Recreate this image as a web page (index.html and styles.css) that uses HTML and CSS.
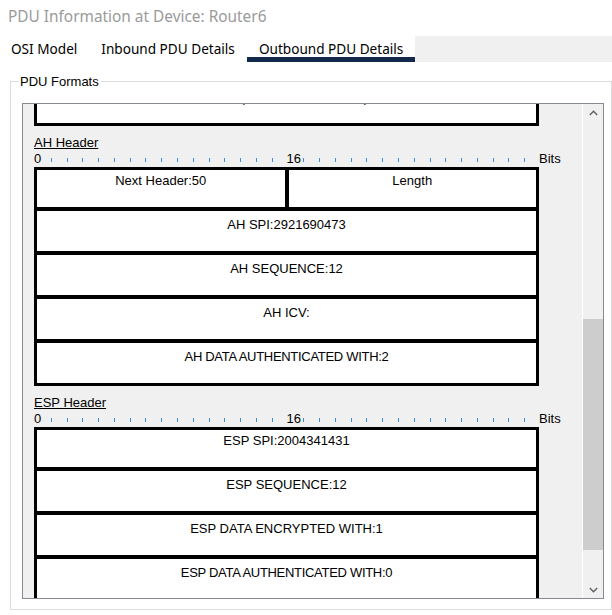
FILE: index.html
```html
<!DOCTYPE html>
<html>
<head>
<meta charset="utf-8">
<link rel="stylesheet" href="styles.css">
</head>
<body>
<div class="title">PDU Information at Device: Router6</div>
<div class="tabs">
  <div class="tab first">OSI Model</div>
  <div class="tab">Inbound PDU Details</div>
  <div class="tab active">Outbound PDU Details</div>
  <div class="tab-fill"></div>
</div>
<fieldset class="group">
  <legend class="group-title">PDU Formats</legend>
  <div class="panel">
    <div class="viewport">
      <div class="content">
        <div class="fields partial">
          <div class="row"><div class="cell">DATA (VARIABLE LENGTH)</div></div>
        </div>

        <div class="section">
          <div class="sec-title">AH Header</div>
          <div class="ruler">
            <div class="scale">
              <span class="num">0</span>
              <span class="tick"></span><span class="tick"></span><span class="tick"></span><span class="tick"></span><span class="tick"></span>
              <span class="tick"></span><span class="tick"></span><span class="tick"></span><span class="tick"></span><span class="tick"></span>
              <span class="tick"></span><span class="tick"></span><span class="tick"></span><span class="tick"></span><span class="tick"></span>
              <span class="num">16</span>
              <span class="tick"></span><span class="tick"></span><span class="tick"></span><span class="tick"></span><span class="tick"></span>
              <span class="tick"></span><span class="tick"></span><span class="tick"></span><span class="tick"></span><span class="tick"></span>
              <span class="tick"></span><span class="tick"></span><span class="tick"></span><span class="tick"></span><span class="tick"></span>
            </div>
            <span class="bits">Bits</span>
          </div>
          <div class="fields">
            <div class="row"><div class="cell">Next Header:50</div><div class="cell">Length</div></div>
            <div class="row"><div class="cell">AH SPI:2921690473</div></div>
            <div class="row"><div class="cell">AH SEQUENCE:12</div></div>
            <div class="row"><div class="cell">AH ICV:</div></div>
            <div class="row"><div class="cell tight">AH DATA AUTHENTICATED WITH:2</div></div>
          </div>
        </div>

        <div class="section">
          <div class="sec-title">ESP Header</div>
          <div class="ruler">
            <div class="scale">
              <span class="num">0</span>
              <span class="tick"></span><span class="tick"></span><span class="tick"></span><span class="tick"></span><span class="tick"></span>
              <span class="tick"></span><span class="tick"></span><span class="tick"></span><span class="tick"></span><span class="tick"></span>
              <span class="tick"></span><span class="tick"></span><span class="tick"></span><span class="tick"></span><span class="tick"></span>
              <span class="num">16</span>
              <span class="tick"></span><span class="tick"></span><span class="tick"></span><span class="tick"></span><span class="tick"></span>
              <span class="tick"></span><span class="tick"></span><span class="tick"></span><span class="tick"></span><span class="tick"></span>
              <span class="tick"></span><span class="tick"></span><span class="tick"></span><span class="tick"></span><span class="tick"></span>
            </div>
            <span class="bits">Bits</span>
          </div>
          <div class="fields">
            <div class="row"><div class="cell">ESP SPI:2004341431</div></div>
            <div class="row"><div class="cell">ESP SEQUENCE:12</div></div>
            <div class="row"><div class="cell">ESP DATA ENCRYPTED WITH:1</div></div>
            <div class="row"><div class="cell tight">ESP DATA AUTHENTICATED WITH:0</div></div>
          </div>
        </div>
      </div>
    </div>
    <div class="scrollbar">
      <div class="arrow">
        <svg width="9" height="6" viewBox="0 0 9 6"><polyline points="0.8,5 4.5,1.3 8.2,5" fill="none" stroke="#606060" stroke-width="1.4"/></svg>
      </div>
      <div class="track"><div class="thumb"></div></div>
      <div class="arrow">
        <svg width="9" height="6" viewBox="0 0 9 6"><polyline points="0.8,1 4.5,4.7 8.2,1" fill="none" stroke="#606060" stroke-width="1.4"/></svg>
      </div>
    </div>
  </div>
</fieldset>
</body>
</html>
```

FILE: styles.css
```css
html, body {
  margin: 0;
  padding: 0;
  background: #ffffff;
}
body {
  width: 612px;
  height: 615px;
  overflow: hidden;
  font-family: "Liberation Sans", Arial, sans-serif;
  color: #000;
}

.title {
  height: 36px;
  box-sizing: border-box;
  padding: 7px 0 0 8px;
  font-family: "Noto Sans", "Open Sans", sans-serif;
  font-size: 15.4px;
  line-height: 20px;
  color: #9a9a9a;
  white-space: nowrap;
}

.tabs {
  display: flex;
  height: 26px;
}
.tab {
  box-sizing: border-box;
  height: 26px;
  padding: 3px 12px 0 12px;
  font-family: "Noto Sans", "Open Sans", sans-serif;
  font-size: 13.6px;
  line-height: 19px;
  color: #000;
  background: #fff;
  border-bottom: 5px solid transparent;
  white-space: nowrap;
}
.tab.first {
  padding-left: 11px;
}
.tab.active {
  border-bottom-color: #13294b;
}
.tab-fill {
  flex: 1;
  background: #f0f0f0;
}

.group {
  margin: 12px 0 0 10px;
  padding: 14px 7px 10px 11px;
  border: 1px solid #dcdcdc;
  min-width: 0;
}
.group-title {
  margin-left: -4px;
  padding: 0 2px;
  font-size: 13px;
  line-height: 15px;
}

.panel {
  display: flex;
  height: 496px;
  box-sizing: border-box;
  border: 1px solid #868a91;
  background: #f0f0f0;
}
.viewport {
  flex: 1;
  overflow: hidden;
  padding-left: 11px;
}
.content {
  margin-top: -19px;
}

.fields {
  width: 505px;
  box-sizing: border-box;
  border: 3px solid #000;
  background: #fff;
}
.row {
  display: flex;
  height: 44px;
  box-sizing: border-box;
  border-top: 4px solid #000;
}
.row:first-child {
  border-top: 0;
  height: 37px;
}
.cell {
  flex: 1;
  text-align: center;
  font-size: 13px;
  line-height: 14px;
  padding-top: 7px;
  white-space: nowrap;
}
.row:first-child .cell {
  padding-top: 4px;
}
.cell + .cell {
  border-left: 4px solid #000;
}
.fields.partial {
  border-top: 0;
}
.fields.partial .row {
  height: 38px;
}
.fields.partial .cell {
  padding-top: 6px;
}
.tight {
  letter-spacing: -0.3px;
}

.sec-title {
  margin-top: 10px;
  font-size: 13px;
  line-height: 14px;
  text-decoration: underline;
}
.ruler {
  display: flex;
  margin-top: 2px;
  margin-bottom: 1px;
  height: 14px;
}
.scale {
  display: grid;
  grid-template-columns: repeat(32, 1fr);
  width: 505px;
  height: 14px;
}
.num {
  font-size: 13px;
  line-height: 14px;
  white-space: nowrap;
}
.tick {
  display: flex;
  align-items: flex-end;
}
.tick::before {
  content: "";
  width: 1px;
  height: 4px;
  margin: 0 0 4px 1px;
  background: #3d8ad6;
}
.bits {
  font-size: 13px;
  line-height: 14px;
}

.scrollbar {
  width: 20px;
  border-left: 1px solid #ffffff;
  display: flex;
  flex-direction: column;
  background: #f0f0f0;
}
.arrow {
  height: 17px;
  display: flex;
  align-items: center;
  justify-content: center;
}
.track {
  flex: 1;
}
.thumb {
  margin-top: 198px;
  height: 231px;
  background: #cdcdcd;
}
```
